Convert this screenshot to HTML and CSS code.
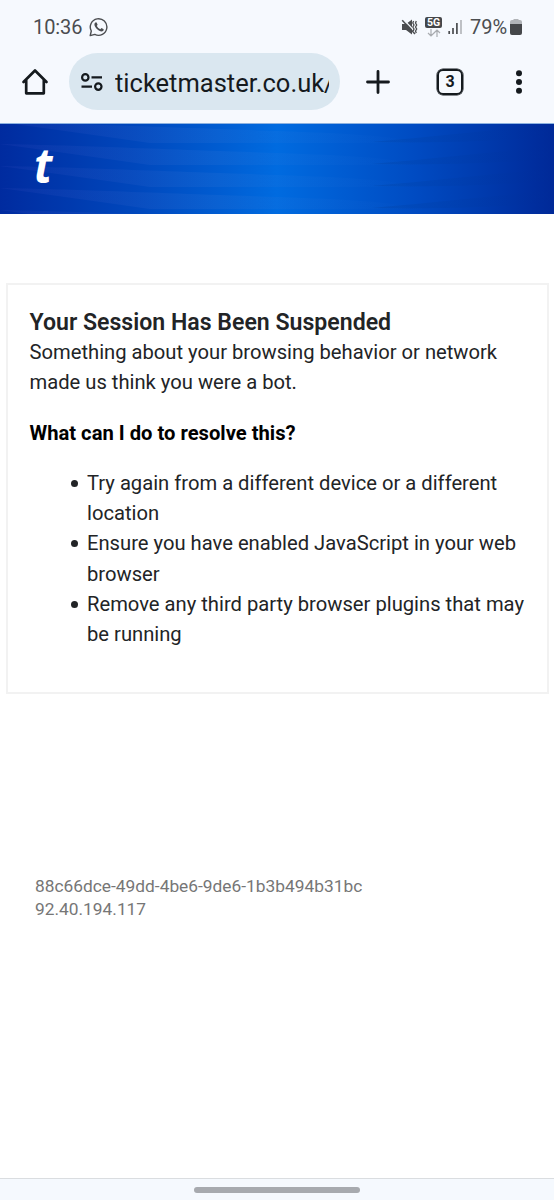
FILE: index.html
```html
<!DOCTYPE html>
<html lang="en">
<head>
<meta charset="utf-8">
<title>Your Session Has Been Suspended</title>
<link rel="stylesheet" href="styles.css">
</head>
<body>
<div class="status">
  <span class="time">10:36</span>
  <svg class="whatsapp" width="20" height="20" viewBox="0 0 20 20"><path d="M1.2 18.6 2.3 14A8.3 8.3 0 1 1 5.8 17.4Z" fill="none" stroke="#4b4d50" stroke-width="1.4" stroke-linejoin="round"/><path d="M6.1 5.7Q6.8 5 7.6 5.5L8.6 7.7 7.8 9Q9 11.300 11.300 12.200L12.500 11.100 14.700 12.200Q14.900 13.700 13.600 14.300C10.700 15.300 5.600 11 5.400 7.600Q5.400 6.400 6.100 5.700Z" fill="#4b4d50"/></svg>
  <svg class="mute" width="17" height="18" viewBox="0 0 17 18"><path d="M1 6h4l6-4.500v15L5 12H1Z" fill="#4b4d50"/><path d="M2.500 1.500 13 12.500" stroke="#f6f9fe" stroke-width="1.200"/><path d="M1.200 2.200 14 16" stroke="#4b4d50" stroke-width="1.500"/><path d="m12.600 3-.8 2 1.200 2-1.200 2 1.200 2-.8 2M15.300 3l-.8 2 1.200 2-1.200 2 1.200 2-1.200 2 .8 2" fill="none" stroke="#4b4d50" stroke-width="1.300"/></svg>
  <span class="network"><b class="badge">5G</b><svg width="14" height="8" viewBox="0 0 14 8" fill="none" stroke="#a9acb0" stroke-width="1.200"><path d="M4 0v7M1 4l3 3 3-3M10 8V1M7 4l3-3 3 3"/></svg></span>
  <svg class="signal" width="15" height="17" viewBox="0 0 15 17"><path d="M1.200 13v3M5 10v6M8.900 5v11" stroke="#4b4d50" stroke-width="1.700"/><path d="M13 2v14" stroke="#b4b7bb" stroke-width="1.700"/></svg>
  <span class="percent">79%</span>
  <svg class="battery" width="12" height="18" viewBox="0 0 12 18"><path d="M3.500 2V1h5v1H10q2 0 2 2v3H0V4q0-2 2-2Z" fill="#b1b4b8"/><path d="M0 6h12v9q0 2-2 2H2q-2 0-2-2Z" fill="#45474a"/></svg>
</div>
<div class="toolbar">
  <svg class="home" width="28" height="28" viewBox="0 0 28 28" fill="none" stroke="#151a1e" stroke-width="2.700" stroke-linecap="round" stroke-linejoin="round"><path d="M2.500 14 14 2.500 25.500 14M5.200 12v13.300h17.600V12"/></svg>
  <div class="omnibox">
    <svg class="tune" width="22" height="18" viewBox="0 0 22 18" fill="none" stroke="#151a1e" stroke-width="2.200"><circle cx="4.300" cy="4.400" r="3.200"/><path d="M10.500 4.400H21M.500 13.600H11"/><circle cx="17.300" cy="13.600" r="3.200"/></svg>
    <span class="url">ticketmaster.co.uk/</span>
  </div>
  <svg class="plus" width="24" height="24" viewBox="0 0 24 24" stroke="#151a1e" stroke-width="2.800" stroke-linecap="round"><path d="M1.500 12h21M12 1.500v21"/></svg>
  <span class="tabs">3</span>
  <svg class="more" width="8" height="24" viewBox="0 0 8 24" fill="#151a1e"><circle cx="4" cy="3.200" r="3"/><circle cx="4" cy="12" r="3"/><circle cx="4" cy="20.800" r="3"/></svg>
</div>
<header class="brand">
  <svg class="rays" width="554" height="91" viewBox="0 0 554 91" preserveAspectRatio="none">
    <defs>
      <linearGradient id="light"><stop offset="0" stop-color="#4a55c8" stop-opacity=".12"/><stop offset=".5" stop-color="#4a80d8" stop-opacity=".14"/><stop offset="1" stop-color="#3a80e0" stop-opacity="0"/></linearGradient>
      <linearGradient id="dark"><stop offset="0" stop-color="#003a90" stop-opacity=".22"/><stop offset="1" stop-color="#003090" stop-opacity="0"/></linearGradient>
      <g id="ray"><path d="M0-2C60-1 130 2 277 7S390 17 430 19H150Q80 9 0-2Z" fill="url(#light)"/><path d="M372 18Q430 13 554 0V13Q460 20 372 18Z" fill="url(#dark)"/></g>
    </defs>
    <use href="#ray"/><use href="#ray" y="22"/><use href="#ray" y="44"/><use href="#ray" y="66"/><use href="#ray" y="88"/>
  </svg>
  <span class="logo">t</span>
</header>
<main class="card">
  <h1>Your Session Has Been Suspended</h1>
  <p>Something about your browsing behavior or network<br>made us think you were a bot.</p>
  <h2>What can I do to resolve this?</h2>
  <ul>
    <li>Try again from a different device or a different<br>location</li>
    <li>Ensure you have enabled JavaScript in your web<br>browser</li>
    <li>Remove any third party browser plugins that may<br>be running</li>
  </ul>
</main>
<footer class="trace">88c66dce-49dd-4be6-9de6-1b3b494b31bc<br>92.40.194.117</footer>
<div class="navbar"><span class="handle"></span></div>
</body>
</html>
```
FILE: styles.css
```css
* { box-sizing: border-box; }
body {
  margin: 0;
  width: 554px;
  height: 1200px;
  display: flex;
  flex-direction: column;
  overflow: hidden;
  background: #fff;
  color: #222426;
  font-family: Roboto, "Liberation Sans", sans-serif;
  white-space: nowrap;
}
svg { display: block; flex: none; }
.status {
  height: 53px;
  flex: none;
  display: flex;
  align-items: center;
  padding: 0 32px 0 33px;
  background: #f6f9fe;
  color: #4b4d50;
  font-size: 20px;
}
.time { width: 50px; letter-spacing: -.1px; }
.whatsapp { margin-left: 6px; }
.mute { margin-left: auto; }
.network {
  display: flex;
  flex-direction: column;
  align-items: center;
  gap: 1px;
  margin-left: 7px;
}
.badge {
  width: 17px;
  height: 11px;
  border-radius: 2px;
  background: #45474a;
  color: #fff;
  font-size: 10.5px;
  line-height: 11px;
  text-align: center;
}
.signal { margin-left: 6px; }
.percent { width: 37px; margin-left: 7px; }
.battery { margin-left: 3px; }
.toolbar {
  height: 71px;
  flex: none;
  display: flex;
  align-items: flex-start;
  padding-left: 21px;
  background: #f6f9fe;
  border-bottom: 1px solid #8db2e0;
}
.home { margin-top: 15px; }
.omnibox {
  width: 271px;
  height: 57px;
  flex: none;
  display: flex;
  align-items: center;
  margin-left: 20px;
  padding-left: 12px;
  border-radius: 29px;
  background: #dae7f0;
}
.url {
  width: 214px;
  margin: 2px 0 0 12px;
  overflow: hidden;
  color: #151a1e;
  font-size: 25.5px;
  line-height: 34px;
}
.plus { margin: 17px 0 0 26px; }
.tabs {
  width: 26px;
  height: 26px;
  margin: 16px 0 0 47px;
  border: 2.5px solid #151a1e;
  border-radius: 6px;
  box-shadow: 0 0 0 .5px #151a1e;
  color: #151a1e;
  font-size: 16px;
  font-weight: 700;
  line-height: 21px;
  text-align: center;
}
.more { margin: 17px 0 0 52px; }
.brand {
  position: relative;
  height: 90px;
  flex: none;
  overflow: hidden;
  background: linear-gradient(90deg, #002b9f 0%, #0048bd 25%, #006be0 50%, #004bc2 75%, #002998 100%);
}
.rays { position: absolute; inset: 0; }
.logo {
  position: relative;
  display: block;
  width: 30px;
  margin-left: 34px;
  color: #fff;
  font: italic 700 48px/82px "Open Sans", sans-serif;
  transform: scaleX(.93);
  transform-origin: 0 0;
}
.card {
  width: 543px;
  height: 411px;
  flex: none;
  margin: 69px 0 0 5.5px;
  padding: 22px 22px 0;
  border: 2px solid #f2f2f2;
}
h1, h2, p, ul { margin: 0; }
h1 { font-size: 23.1px; line-height: 30px; font-weight: 600; position: relative; top: .5px; }
p, ul { font-size: 20.2px; line-height: 30.3px; }
h2 { margin: 20px 0; color: #000; font-size: 20.2px; line-height: 30.3px; font-weight: 700; }
ul { padding-left: 57.5px; list-style: none; }
li::before {
  content: "";
  float: left;
  width: 7px;
  height: 7px;
  margin: 12px 0 0 -16.5px;
  border-radius: 50%;
  background: #222426;
}
.trace {
  flex: none;
  margin: 181px 0 0 35px;
  color: #767676;
  font-size: 17.33px;
  line-height: 23px;
}
.navbar {
  height: 22px;
  flex: none;
  margin-top: auto;
  padding-top: 8px;
  background: #f5f9fe;
  border-top: 1px solid #dadde0;
}
.handle {
  display: block;
  width: 166px;
  height: 6px;
  margin-left: 194px;
  border-radius: 3px;
  background: #a7aaaf;
}
```
